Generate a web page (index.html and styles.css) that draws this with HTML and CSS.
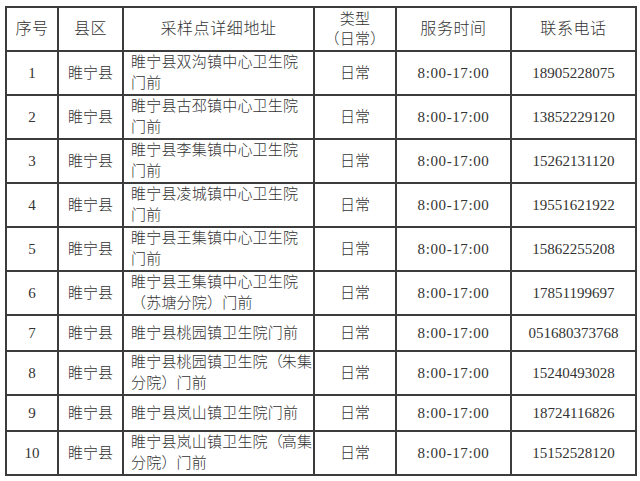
FILE: index.html
```html
<!DOCTYPE html>
<html lang="zh-CN">
<head>
<meta charset="utf-8">
<title>核酸采样点</title>
<link rel="stylesheet" href="styles.css">
</head>
<body>
<table class="sites">
  <colgroup>
    <col class="c-no"><col class="c-county"><col class="c-addr"><col class="c-type"><col class="c-time"><col class="c-tel">
  </colgroup>
  <thead>
    <tr class="head">
      <th>序号</th><th>县区</th><th>采样点详细地址</th><th class="type">类型<br>（日常）</th><th>服务时间</th><th>联系电话</th>
    </tr>
  </thead>
  <tbody>
    <tr><td class="num">1</td><td>睢宁县</td><td class="addr">睢宁县双沟镇中心卫生院<br>门前</td><td>日常</td><td class="time">8:00-17:00</td><td class="num">18905228075</td></tr>
    <tr><td class="num">2</td><td>睢宁县</td><td class="addr">睢宁县古邳镇中心卫生院<br>门前</td><td>日常</td><td class="time">8:00-17:00</td><td class="num">13852229120</td></tr>
    <tr><td class="num">3</td><td>睢宁县</td><td class="addr">睢宁县李集镇中心卫生院<br>门前</td><td>日常</td><td class="time">8:00-17:00</td><td class="num">15262131120</td></tr>
    <tr><td class="num">4</td><td>睢宁县</td><td class="addr">睢宁县凌城镇中心卫生院<br>门前</td><td>日常</td><td class="time">8:00-17:00</td><td class="num">19551621922</td></tr>
    <tr><td class="num">5</td><td>睢宁县</td><td class="addr">睢宁县王集镇中心卫生院<br>门前</td><td>日常</td><td class="time">8:00-17:00</td><td class="num">15862255208</td></tr>
    <tr><td class="num">6</td><td>睢宁县</td><td class="addr">睢宁县王集镇中心卫生院<br>（苏塘分院）门前</td><td>日常</td><td class="time">8:00-17:00</td><td class="num">17851199697</td></tr>
    <tr class="single"><td class="num">7</td><td>睢宁县</td><td class="addr">睢宁县桃园镇卫生院门前</td><td>日常</td><td class="time">8:00-17:00</td><td class="num">051680373768</td></tr>
    <tr><td class="num">8</td><td>睢宁县</td><td class="addr">睢宁县桃园镇卫生院<span class="paren">（</span>朱集<br>分院）门前</td><td>日常</td><td class="time">8:00-17:00</td><td class="num">15240493028</td></tr>
    <tr class="single"><td class="num">9</td><td>睢宁县</td><td class="addr">睢宁县岚山镇卫生院门前</td><td>日常</td><td class="time">8:00-17:00</td><td class="num">18724116826</td></tr>
    <tr><td class="num">10</td><td>睢宁县</td><td class="addr">睢宁县岚山镇卫生院<span class="paren">（</span>高集<br>分院）门前</td><td>日常</td><td class="time">8:00-17:00</td><td class="num">15152528120</td></tr>
  </tbody>
</table>
</body>
</html>
```

FILE: styles.css
```css
html, body {
  margin: 0;
  padding: 0;
  background: #ffffff;
}

body {
  padding: 6px 0 0 5px;
  font-family: "Liberation Serif", "Noto Sans CJK SC", serif;
  font-size: 15px;
  color: #333333;
}

.sites {
  border-collapse: collapse;
  table-layout: fixed;
  width: 630px;
}

.c-no { width: 52px; }
.c-county { width: 65px; }
.c-addr { width: 191px; }
.c-type { width: 82px; }
.c-time { width: 115px; }
.c-tel { width: 125px; }

.sites th,
.sites td {
  border: 2px solid #3c3c3c;
  padding: 0;
  text-align: center;
  vertical-align: middle;
  font-weight: 300;
  line-height: 21px;
}

.sites th {
  font-size: 16px;
  letter-spacing: 0.6px;
  line-height: 20px;
}

.sites th.type {
  font-size: 15px;
  letter-spacing: 0.3px;
}

.head { height: 44px; }

.sites tbody tr { height: 44px; }
.sites tbody tr.single { height: 36px; }

.sites td.addr {
  text-align: left;
  padding-left: 7px;
  letter-spacing: 0.2px;
}

.paren {
  letter-spacing: -1px;
}

.sites td.time {
  letter-spacing: 0.6px;
}
```
